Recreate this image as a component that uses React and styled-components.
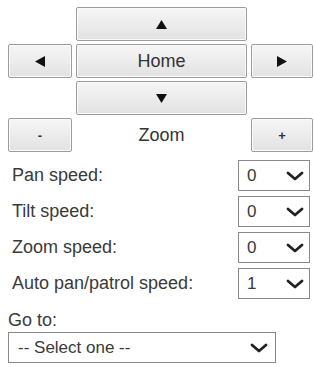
import React from 'react'
import styled, { createGlobalStyle } from 'styled-components'

const GlobalStyle = createGlobalStyle`
  html, body {
    margin: 0;
    padding: 0;
    background: #fff;
  }
  body {
    font-family: "Liberation Sans", Arial, sans-serif;
    color: #3a3a3a;
  }
`

const Panel = styled.div`
  padding: 7px 0 0 8px;
  width: 314px;
  box-sizing: border-box;
`

const Pad = styled.div`
  display: grid;
  grid-template-columns: 64px 171px 62px;
  grid-template-rows: repeat(4, 34px);
  column-gap: 4px;
  row-gap: 3px;
`

const PadButton = styled.button`
  grid-column: ${p => p.col};
  grid-row: ${p => p.row};
  display: flex;
  align-items: center;
  justify-content: center;
  margin: 0;
  padding: 0;
  border: 1px solid #9c9c9c;
  border-radius: 2px;
  background: linear-gradient(#f6f6f6, #e2e2e2);
  box-shadow: inset 0 0 0 1px #fafafa;
  color: #333;
  font-family: inherit;
  font-size: ${p => p.small ? '13px' : '18px'};
  font-weight: ${p => p.small ? 'bold' : 'normal'};
  cursor: pointer;
`

const ZoomLabel = styled.div`
  grid-column: 2;
  grid-row: 4;
  display: flex;
  align-items: center;
  justify-content: center;
  font-size: 18px;
  color: #333;
`

const Settings = styled.div`
  display: flex;
  flex-direction: column;
  gap: 5px;
  margin-top: 8px;
  padding-right: 4px;
`

const SettingRow = styled.div`
  display: flex;
  align-items: center;
  justify-content: space-between;
  height: 31px;
`

const Label = styled.label`
  font-size: 18px;
  color: #3a3a3a;
  padding-left: ${p => p.indent || 0}px;
`

const SelectWrap = styled.div`
  position: relative;
  width: ${p => p.width}px;
  height: 31px;
`

const Select = styled.select`
  appearance: none;
  -webkit-appearance: none;
  width: 100%;
  height: 100%;
  margin: 0;
  padding: 0 0 0 ${p => p.pad}px;
  border: 1px solid #8a8a8a;
  border-radius: 0;
  background: #fff;
  color: #3a3a3a;
  font-family: inherit;
  font-size: 17px;
  box-sizing: border-box;
  outline: none;
`

const Chevron = styled.svg`
  position: absolute;
  right: ${p => p.right}px;
  top: 50%;
  width: 18px;
  height: 10px;
  margin-top: -5px;
  pointer-events: none;
`

const GoToLabel = styled.div`
  font-size: 18px;
  color: #3a3a3a;
  line-height: 22px;
  margin-top: 10px;
  margin-bottom: 1px;
`

const Arrow = ({ dir }) => {
  const shapes = {
    up: '0,9 5.5,0 11,9',
    down: '0,0 11,0 5.5,9',
    left: '10,0 10,11 0,5.5',
    right: '0,0 0,11 10,5.5',
  }
  const horiz = dir === 'left' || dir === 'right'
  return (
    <svg width={horiz ? 10 : 11} height={horiz ? 11 : 9} viewBox={horiz ? '0 0 10 11' : '0 0 11 9'}>
      <polygon points={shapes[dir]} fill="#111" />
    </svg>
  )
}

const Dropdown = ({ width, pad, right, value, options }) => (
  <SelectWrap width={width}>
    <Select pad={pad} defaultValue={value}>
      {options.map(o => <option key={o}>{o}</option>)}
    </Select>
    <Chevron right={right} viewBox="0 0 18 10">
      <polyline points="2,2 9,8 16,2" fill="none" stroke="#222" strokeWidth="2.8" strokeLinecap="round" strokeLinejoin="round" />
    </Chevron>
  </SelectWrap>
)

const speeds = ['0', '1', '2', '3', '4', '5']

const rows = [
  { label: 'Pan speed:', value: '0' },
  { label: 'Tilt speed:', value: '0' },
  { label: 'Zoom speed:', value: '0' },
  { label: 'Auto pan/patrol speed:', value: '1' },
]

export default function App() {
  return (
    <>
      <GlobalStyle />
      <Panel>
        <Pad>
          <PadButton col={2} row={1}><Arrow dir="up" /></PadButton>
          <PadButton col={1} row={2}><Arrow dir="left" /></PadButton>
          <PadButton col={2} row={2}>Home</PadButton>
          <PadButton col={3} row={2}><Arrow dir="right" /></PadButton>
          <PadButton col={2} row={3}><Arrow dir="down" /></PadButton>
          <PadButton col={1} row={4} small>-</PadButton>
          <ZoomLabel>Zoom</ZoomLabel>
          <PadButton col={3} row={4} small>+</PadButton>
        </Pad>
        <Settings>
          {rows.map(r => (
            <SettingRow key={r.label}>
              <Label indent={4}>{r.label}</Label>
              <Dropdown width={72} pad={8} right={6} value={r.value} options={speeds} />
            </SettingRow>
          ))}
        </Settings>
        <GoToLabel>Go to:</GoToLabel>
        <Dropdown width={268} pad={9} right={8} value="-- Select one --" options={['-- Select one --', 'Preset 1', 'Preset 2']} />
      </Panel>
    </>
  )
}
